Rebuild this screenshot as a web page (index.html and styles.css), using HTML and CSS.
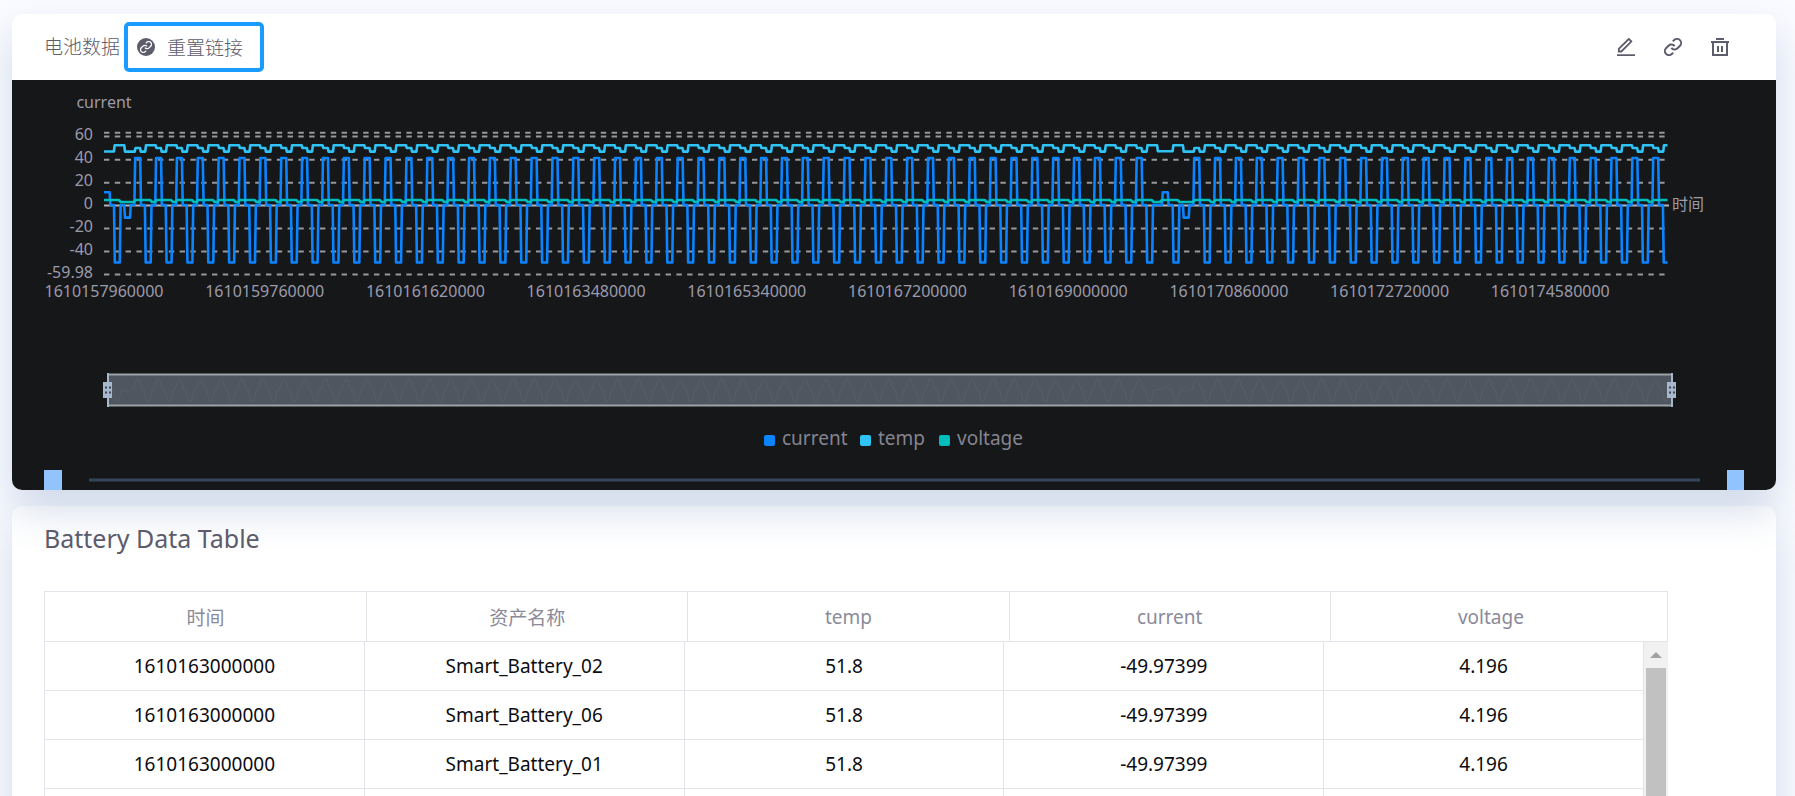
FILE: index.html
```html
<!DOCTYPE html>
<html lang="zh-CN">
<head>
<meta charset="utf-8">
<title>电池数据</title>
<link rel="stylesheet" href="styles.css">
</head>
<body>
<svg class="sprite" aria-hidden="true">
  <symbol id="link" viewBox="1 1 22 22"><path fill="none" stroke-width="2.4" d="M10 13a5 5 0 0 0 7.540.54l3-3a5 5 0 0 0-7.070-7.070l-1.720 1.710M14 11a5 5 0 0 0-7.540-.54l-3 3a5 5 0 0 0 7.070 7.070l1.710-1.710"/></symbol>
</svg>
<main class="page">
  <section class="card chart-card">
    <header class="card-head">
      <h1 class="chart-title">电池数据</h1>
      <button class="reset" type="button">
        <svg class="reset-icon" viewBox="0 0 18 18" aria-hidden="true"><circle cx="9" cy="9" r="9" fill="currentColor"/><use href="#link" x="3" y="3" width="12" height="12" stroke="#fff"/></svg>
        <span>重置链接</span>
      </button>
      <div class="actions">
        <button class="icon-btn" type="button" aria-label="编辑"><svg viewBox="2 2 20 20"><path d="M6.414 16L16.556 5.858l-1.414-1.414L5 14.586V16h1.414zm.829 2H3v-4.243L14.435 2.322a1 1 0 0 1 1.414 0l2.829 2.829a1 1 0 0 1 0 1.414L7.243 18zM2 20h20v2H2v-2z"/></svg></button>
        <button class="icon-btn" type="button" aria-label="链接"><svg viewBox="0 0 18 18"><use href="#link" width="18" height="18" stroke="#5d5c6b"/></svg></button>
        <button class="icon-btn" type="button" aria-label="删除"><svg viewBox="0 0 18 18"><path d="M5 0h8v2H5zM0 3h18v2h-1v13H1V5H0zM3 5v11h12V5zM6 8h2v6H6zM10 8h2v6h-2z" fill-rule="evenodd"/></svg></button>
      </div>
    </header>
    <svg class="chart" viewBox="12 80 1764 410" role="img" aria-label="current, temp, voltage">
      <g class="axis-text">
        <text x="104" y="108" text-anchor="middle">current</text>
        <g id="y-labels" text-anchor="end"></g>
        <g id="x-labels" text-anchor="middle"></g>
        <text x="1672" y="210">时间</text>
      </g>
      <g id="grid" class="grid"></g>
      <path class="zero" d="M104 205.500H1669"/>
      <path id="current" class="line current"/>
      <path id="temp" class="line temp"/>
      <path id="voltage" class="line voltage"/>
      <rect class="zoom-fill" x="107" y="374" width="1566" height="32"/>
      <path id="preview" class="preview"/>
      <path class="zoom-edge" d="M107 374.500H1673M107 405.500H1673"/>
      <path class="zoom-side" d="M108 373V407M1672 373V407"/>
      <g id="handle">
        <rect x="103" y="382" width="9" height="16" fill="#a7b7cc"/>
        <path d="M105 387.500h2m2 0h2M105 392.500h2m2 0h2" stroke="#3d4653" stroke-width="2"/>
      </g>
      <use href="#handle" x="1564"/>
      <g class="legend-text">
        <rect class="fill-current" x="764" y="435" width="11" height="11" rx="2"/>
        <text x="782" y="445">current</text>
        <rect class="fill-temp" x="860" y="435" width="11" height="11" rx="2"/>
        <text x="878" y="445">temp</text>
        <rect class="fill-voltage" x="939" y="435" width="11" height="11" rx="2"/>
        <text x="957" y="445">voltage</text>
      </g>
      <path d="M89 480H1700" stroke="#34475a" stroke-width="3"/>
      <path d="M44 470h18v20H44zM1727 470h17v20h-17z" fill="#91c3ff"/>
    </svg>
  </section>

  <section class="card table-card">
    <h2 class="table-title">Battery Data Table</h2>
    <div class="table-box">
      <table class="head-table">
        <thead><tr><th>时间</th><th>资产名称</th><th>temp</th><th>current</th><th>voltage</th><td class="gutter"></td></tr></thead>
      </table>
      <div class="body-wrap">
        <table class="body-table">
          <tbody>
            <tr><td>1610163000000</td><td>Smart_Battery_02</td><td>51.8</td><td>-49.97399</td><td>4.196</td></tr>
            <tr><td>1610163000000</td><td>Smart_Battery_06</td><td>51.8</td><td>-49.97399</td><td>4.196</td></tr>
            <tr><td>1610163000000</td><td>Smart_Battery_01</td><td>51.8</td><td>-49.97399</td><td>4.196</td></tr>
            <tr><td></td><td></td><td></td><td></td><td></td></tr>
          </tbody>
        </table>
        <div class="scrollbar"><span class="arrow"></span><span class="thumb"></span></div>
      </div>
    </div>
  </section>
</main>
<script src="chart.js"></script>
</body>
</html>
```
FILE: styles.css
```css
* { box-sizing: border-box; }
body {
  margin: 0;
  background: #fafbff;
  color: #5d5c6b;
  font-family: "Noto Sans", "Noto Sans CJK SC", sans-serif;
  font-size: 19px;
}
.sprite { position: absolute; width: 0; height: 0; }
.page {
  height: 100vh;
  overflow: hidden;
  padding: 14px 19px 0 12px;
  display: flex;
  flex-direction: column;
  gap: 16px;
}
.card {
  flex: none;
  border-radius: 10px;
  background: #fff;
  box-shadow: 0 20px 42px rgba(66, 98, 160, 0.22);
}
.chart-card { position: relative; z-index: 1; overflow: hidden; }
.card-head {
  display: flex;
  align-items: center;
  height: 66px;
  padding: 0 47px 0 32px;
}
.chart-title { margin: 0; font-size: 19px; font-weight: 300; line-height: 28px; }
.reset {
  display: flex;
  align-items: center;
  gap: 12px;
  height: 50px;
  margin-left: 4px;
  padding: 0 17px 0 9px;
  border: 4px solid #1a9bff;
  border-radius: 5px;
  background: #fff;
  color: inherit;
  font: inherit;
  font-weight: 300;
}
.reset-icon { width: 18px; height: 18px; }
.actions { display: flex; gap: 29px; margin-left: auto; }
.icon-btn {
  width: 18px;
  height: 18px;
  padding: 0;
  border: 0;
  background: none;
}
.icon-btn svg { display: block; width: 18px; height: 18px; fill: #5d5c6b; }
.chart {
  display: block;
  width: 100%;
  height: auto;
  background: #161719;
}
.axis-text { fill: #9c9bab; font-size: 16px; }
.legend-text { font-size: 19px; fill: #85848f; }
.grid { stroke: #97979c; stroke-width: 2; stroke-dasharray: 5.4; }
.zero { stroke: #b4b4b8; stroke-width: 2; }
.line { fill: none; stroke-width: 2.6; stroke-linejoin: round; }
.current { stroke: #0a84ff; }
.temp { stroke: #2fc3f6; }
.voltage { stroke: #00bdbd; }
.legend-text .fill-current { fill: #0a84ff; }
.legend-text .fill-temp { fill: #2fc3f6; }
.legend-text .fill-voltage { fill: #00bdbd; }
.zoom-fill { fill: #50565f; }
.zoom-edge { stroke: #9ca2a8; stroke-width: 2; }
.zoom-side { stroke: #a7b7cc; stroke-width: 2; }
.preview { fill: none; stroke: #565e6a; stroke-width: 1; }
.table-card { padding: 15px 108px 0 32px; }
.table-title { margin: 0; font-size: 25px; font-weight: 400; line-height: 34px; }
.table-box { margin-top: 36px; border-left: 1px solid #e3e3ea; }
table { width: 100%; border-collapse: separate; border-spacing: 0; table-layout: fixed; }
th, td { padding: 0; text-align: center; font-weight: 400; border-bottom: 1px solid #e3e3ea; }
.head-table th, .head-table .gutter { height: 51px; border-top: 1px solid #e3e3ea; }
.head-table th { color: #8b8a99; border-left: 1px solid #e3e3ea; }
.head-table th:first-child { border-left: 0; }
.head-table .gutter { width: 17px; border-right: 1px solid #e3e3ea; }
.body-wrap { display: flex; }
.body-table { flex: 1; }
.body-table td { height: 49px; color: #0c0c10; border-right: 1px solid #e3e3ea; }
.scrollbar {
  display: flex;
  flex-direction: column;
  align-items: center;
  width: 24px;
  background: #f1f1f1;
}
.arrow {
  margin: 10px 0;
  border: 6px solid transparent;
  border-top: 0;
  border-bottom-color: #a3a3a3;
}
.thumb { flex: 1; width: 20px; background: #c1c1c1; }
```
FILE: chart.js
```js
const NS = "http://www.w3.org/2000/svg";
const PERIOD = 20.864;
const START = 104;
const END = 1667.5;
const RAMP = 0.4;

const byId = id => document.getElementById(id);

function addText(parent, x, y, value) {
  const text = document.createElementNS(NS, "text");
  text.setAttribute("x", x);
  text.setAttribute("y", y);
  text.textContent = value;
  parent.append(text);
}

// Each step is [x, level]: the level holds from x until the next step.
function stepPath(steps, ramp, scale = y => y) {
  let d = `M${START} ${scale(steps[0][1])}`;
  let level = scale(steps[0][1]);
  for (const [x, y] of steps.slice(1)) {
    const next = scale(y);
    d += `L${x - ramp} ${level}L${x + ramp} ${next}`;
    level = next;
  }
  return d + `L${END} ${level}`;
}

const peaks = [
  ...Array.from({ length: 49 }, (_, i) => 137.7 + i * PERIOD),
  ...Array.from({ length: 23 }, (_, i) => 1196.7 + i * PERIOD)
];

const BASE = 205, PEAK = 158, TROUGH = 262.5, BUMP = 192.3, DIP = 217.6;
const current = [[START, BUMP], [110, BASE]];
const pulse = (center, level) => current.push([center - 2.9, level], [center + 2.9, BASE]);
const temp = [[START, 151.5]];
const voltage = [[START, 200]];

function restart(x) {
  pulse(x, TROUGH);
  pulse(x + 10.2, DIP);
  temp.push([x - 3, 145.2], [x + 7.3, 151.6]);
  voltage.push([x + 2.5, 202]);
}

restart(117.3);
peaks.forEach((p, i) => {
  if (i === 49) {
    pulse(1165.3, BUMP);
    voltage.push([1161, 200]);
    restart(1176);
  }
  pulse(p, PEAK);
  if (i < peaks.length - 1) pulse(p + 10.5, TROUGH);
  else current.push([p + 7.6, TROUGH]);
  voltage.push([p - 3, 200]);
  temp.push([p - 2.6, 148], [p + 2.7, 151.6], [p + 7.9, 145.2]);
  if (i === 48) temp.push([p + 18.3, 151.3]);
  if (i < peaks.length - 1) voltage.push([p + 13.5, 202]);
});

byId("current").setAttribute("d", stepPath(current, RAMP));
byId("temp").setAttribute("d", stepPath(temp, RAMP));
byId("voltage").setAttribute("d", stepPath(voltage, 1));
byId("preview").setAttribute("d", stepPath(current, 1.4, y => 389.5 + (y - BASE) * 0.2));

[132.7, 136.6, 159.7, 182.7, 228.5, 251.6, 274.4].forEach(y => {
  const line = document.createElementNS(NS, "path");
  line.setAttribute("d", `M${START} ${y}H1667`);
  byId("grid").append(line);
});

["60", "40", "20", "0", "-20", "-40", "-59.98"].forEach((value, i) =>
  addText(byId("y-labels"), 93, 140 + i * 23, value));

["1610157960000", "1610159760000", "1610161620000", "1610163480000", "1610165340000",
 "1610167200000", "1610169000000", "1610170860000", "1610172720000", "1610174580000"]
  .forEach((value, i) => addText(byId("x-labels"), 104 + i * 160.7, 297, value));
```
